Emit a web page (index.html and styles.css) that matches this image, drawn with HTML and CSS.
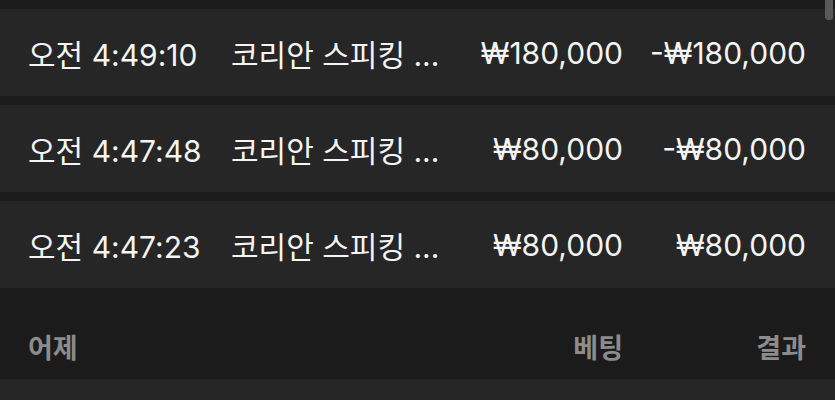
FILE: index.html
```html
<!DOCTYPE html>
<html lang="ko">
<head>
<meta charset="utf-8">
<link rel="stylesheet" href="styles.css">
</head>
<body>
<div class="page">
  <div class="list">
    <div class="row">
      <span class="time">오전 4:49:10</span>
      <span class="name">코리안 스피킹 ...</span>
      <span class="bet">₩180,000</span>
      <span class="result">-₩180,000</span>
    </div>
    <div class="row">
      <span class="time">오전 4:47:48</span>
      <span class="name">코리안 스피킹 ...</span>
      <span class="bet">₩80,000</span>
      <span class="result">-₩80,000</span>
    </div>
    <div class="row">
      <span class="time">오전 4:47:23</span>
      <span class="name">코리안 스피킹 ...</span>
      <span class="bet">₩80,000</span>
      <span class="result">₩80,000</span>
    </div>
  </div>
  <div class="header">
    <span class="day">어제</span>
    <span></span>
    <span class="bet">베팅</span>
    <span class="result">결과</span>
  </div>
  <div class="list list-next">
    <div class="row"></div>
  </div>
  <div class="thumb"></div>
</div>
</body>
</html>
```

FILE: styles.css
```css
html, body {
  margin: 0;
  padding: 0;
  background: #1b1b1b;
  overflow: hidden;
}
.page {
  position: relative;
  width: 835px;
  height: 400px;
  overflow: hidden;
  font-family: Inter, "Noto Sans CJK KR", sans-serif;
  color: #f4f4f4;
}
.list {
  display: flex;
  flex-direction: column;
  gap: 9px;
  padding-top: 9px;
}
.list-next {
  padding-top: 0;
}
.row, .header {
  display: grid;
  grid-template-columns: 203px 1fr 150px 183px;
  align-items: center;
  padding: 0 29px 0 28px;
}
.row {
  height: 87px;
  background: #262626;
  font-size: 30px;
  white-space: nowrap;
}
.time, .name, .day {
  text-align: left;
}
.bet, .result {
  text-align: right;
}
.header {
  height: 91px;
  align-items: end;
  padding-bottom: 13px;
  box-sizing: border-box;
  font-size: 27px;
  font-weight: 700;
  color: #8c8c8c;
}
.thumb {
  position: absolute;
  top: 0;
  right: 2px;
  width: 8px;
  height: 20px;
  background: #595959;
  border-radius: 0 0 3px 3px;
}
```
